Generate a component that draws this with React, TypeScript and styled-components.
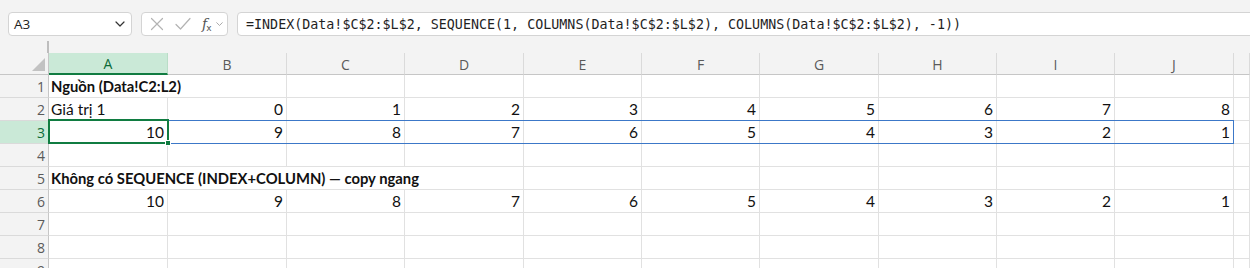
import { createGlobalStyle, styled } from "styled-components";

const GlobalStyle = createGlobalStyle`
  html, body {
    margin: 0;
    padding: 0;
    background: #ffffff;
    overflow: hidden;
  }
  * {
    box-sizing: border-box;
  }
`;

const COLS = ["A", "B", "C", "D", "E", "F", "G", "H", "I", "J"];
const WIDTHS = [119, 119, 118, 119, 118, 118, 119, 118, 118, 119];
const TEMPLATE = `49px ${WIDTHS.map((w) => `${w}px`).join(" ")} 1fr`;
const GREEN = "#107c41";
const GRID = "#e1e1e1";

const Page = styled.div`
  width: 1250px;
  height: 268px;
  overflow: hidden;
  font-family: Lato, "Liberation Sans", sans-serif;
`;

const Toolbar = styled.div`
  height: 53px;
  background: #f3f3f3;
  display: flex;
  flex-direction: column;
`;

const BarRow = styled.div`
  display: flex;
  align-items: center;
  gap: 9px;
  padding: 12px 0 0 8px;
  margin-right: -20px;
`;

const Box = styled.div`
  height: 24px;
  background: #ffffff;
  border: 1px solid #d4d4d4;
  border-radius: 4px;
  display: flex;
  align-items: center;
`;

const NameBox = styled(Box)`
  width: 124px;
  padding: 0 6px 0 5px;
  justify-content: space-between;
  font-family: "Open Sans", "Noto Sans", sans-serif;
  font-size: 13.5px;
  color: #222;
`;

const FxBox = styled(Box)`
  width: 87px;
  padding: 0 0 0 8px;
  gap: 11px;
`;

const FxLabel = styled.span`
  font-family: "DejaVu Serif", "Liberation Serif", serif;
  font-style: italic;
  font-size: 14px;
  color: #555;
  letter-spacing: -1px;
  margin-right: -6px;

  sub {
    font-size: 9px;
    font-style: normal;
    font-family: "DejaVu Sans", sans-serif;
    vertical-align: -2px;
  }
`;

const FormulaBox = styled(Box)`
  flex: 1;
  padding-left: 8px;
  font-family: "DejaVu Sans Mono", "Liberation Mono", monospace;
  font-size: 13.35px;
  color: #1f1f1f;
  white-space: nowrap;
`;

const Splitter = styled.div`
  width: 2px;
  height: 13px;
  margin: 5px 0 0 47px;
  background: #bdbdbd;
`;

const SheetArea = styled.div`
  position: relative;
`;

const Sheet = styled.div`
  display: grid;
  grid-template-columns: ${TEMPLATE};
  grid-template-rows: 22px;
  grid-auto-rows: 23px;
`;

const SelectionLayer = styled(Sheet)`
  position: absolute;
  inset: 0;
  pointer-events: none;
`;

const Corner = styled.div`
  background: #f3f3f3;
  border-right: 1px solid #c6c6c6;
  border-bottom: 1px solid #c6c6c6;
  display: flex;
  align-items: flex-end;
  justify-content: flex-end;
  padding: 0 3px 3px 0;
`;

const ColHead = styled.div<{ $active?: boolean }>`
  background: ${(p) => (p.$active ? "#cae9d7" : "#f3f3f3")};
  border-right: 1px solid ${(p) => (p.$active ? "#b9ddc7" : "#dadada")};
  border-bottom: ${(p) => (p.$active ? `2px solid ${GREEN}` : "1px solid #c6c6c6")};
  color: ${(p) => (p.$active ? "#0c6b37" : "#5a5a5a")};
  font-family: "Open Sans", "Noto Sans", sans-serif;
  font-size: 14px;
  display: flex;
  align-items: center;
  justify-content: center;
  padding-top: 1px;
`;

const RowHead = styled.div<{ $active?: boolean }>`
  background: ${(p) => (p.$active ? "#cae9d7" : "#f3f3f3")};
  border-right: 1px solid #c6c6c6;
  border-bottom: 1px solid #dadada;
  color: ${(p) => (p.$active ? "#0c6b37" : "#5a5a5a")};
  font-family: "Open Sans", "Noto Sans", sans-serif;
  font-size: 14px;
  display: flex;
  align-items: center;
  justify-content: flex-end;
  padding: 1px 3px 0 0;
`;

const Cell = styled.div<{ $num?: boolean; $bold?: boolean; $span?: number }>`
  grid-column: ${(p) => (p.$span ? `span ${p.$span}` : "auto")};
  border-right: 1px solid ${GRID};
  border-bottom: 1px solid ${GRID};
  font-size: ${(p) => (p.$bold ? "14.8px" : "15.5px")};
  font-weight: ${(p) => (p.$bold ? 700 : 400)};
  color: #111;
  white-space: nowrap;
  overflow: hidden;
  display: flex;
  align-items: flex-end;
  justify-content: ${(p) => (p.$num ? "flex-end" : "flex-start")};
  padding: 0 3px 2px 2px;
  line-height: 18px;
`;

const SpillRange = styled.div`
  grid-row: 4;
  grid-column: 3 / 12;
  margin: -1px 0 0 0;
  border: 1px solid #3c78c8;
  border-left: none;
`;

const ActiveCell = styled.div`
  grid-row: 4;
  grid-column: 2 / 3;
  margin: -2px -1px 0 -1px;
  border: 2px solid ${GREEN};
  position: relative;
`;

const FillHandle = styled.span`
  position: absolute;
  right: -4px;
  bottom: -4px;
  width: 6px;
  height: 6px;
  background: ${GREEN};
  border: 1px solid #fff;
`;

const Chevron = ({ size = 10, color = "#333" }: { size?: number; color?: string }) => (
  <svg width={size} height={size * 0.6} viewBox="0 0 10 6" fill="none">
    <path d="M1 1l4 4 4-4" stroke={color} strokeWidth="1.2" strokeLinecap="round" strokeLinejoin="round" />
  </svg>
);

const CancelIcon = () => (
  <svg width="14" height="14" viewBox="0 0 14 14" fill="none">
    <path d="M1.5 1.5l11 11M12.5 1.5l-11 11" stroke="#b3b3b3" strokeWidth="1.2" strokeLinecap="round" />
  </svg>
);

const EnterIcon = () => (
  <svg width="16" height="14" viewBox="0 0 16 14" fill="none">
    <path d="M1 7.5l4.5 4.5L15 1.5" stroke="#b3b3b3" strokeWidth="1.2" strokeLinecap="round" strokeLinejoin="round" />
  </svg>
);

const CornerTriangle = () => (
  <svg width="13" height="13" viewBox="0 0 13 13">
    <path d="M13 0V13H0Z" fill="#c2c2c2" />
  </svg>
);

type Row = { label?: string; bold?: boolean; span?: number; values: (number | null)[] };

const descending = [10, 9, 8, 7, 6, 5, 4, 3, 2, 1];
const empty = (n: number) => Array(n).fill(null);

const rows: Row[] = [
  { label: "Nguồn (Data!C2:L2)", bold: true, span: 2, values: empty(8) },
  { label: "Giá trị 1", values: [0, 1, 2, 3, 4, 5, 6, 7, 8] },
  { values: descending },
  { values: empty(10) },
  { label: "Không có SEQUENCE (INDEX+COLUMN) — copy ngang", bold: true, span: 4, values: empty(6) },
  { values: descending },
  { values: empty(10) },
  { values: empty(10) },
  { values: empty(10) },
];

export default function App() {
  return (
    <Page>
      <GlobalStyle />
      <Toolbar>
        <BarRow>
          <NameBox>
            <span>A3</span>
            <Chevron />
          </NameBox>
          <FxBox>
            <CancelIcon />
            <EnterIcon />
            <FxLabel>
              f<sub>x</sub>
            </FxLabel>
            <Chevron size={7} color="#999" />
          </FxBox>
          <FormulaBox>
            =INDEX(Data!$C$2:$L$2, SEQUENCE(1, COLUMNS(Data!$C$2:$L$2), COLUMNS(Data!$C$2:$L$2), -1))
          </FormulaBox>
        </BarRow>
        <Splitter />
      </Toolbar>
      <SheetArea>
        <Sheet>
          <Corner>
            <CornerTriangle />
          </Corner>
          {COLS.map((c) => (
            <ColHead key={c} $active={c === "A"}>
              {c}
            </ColHead>
          ))}
          <ColHead />
          {rows.map((row, i) => (
            <SheetRow key={i} index={i + 1} row={row} />
          ))}
        </Sheet>
        <SelectionLayer>
          <SpillRange />
          <ActiveCell>
            <FillHandle />
          </ActiveCell>
        </SelectionLayer>
      </SheetArea>
    </Page>
  );
}

function SheetRow({ index, row }: { index: number; row: Row }) {
  return (
    <>
      <RowHead $active={index === 3}>{index}</RowHead>
      {row.label !== undefined && (
        <Cell $bold={row.bold} $span={row.span}>
          {row.label}
        </Cell>
      )}
      {row.values.map((v, j) => (
        <Cell key={j} $num>
          {v}
        </Cell>
      ))}
      <Cell />
    </>
  );
}
